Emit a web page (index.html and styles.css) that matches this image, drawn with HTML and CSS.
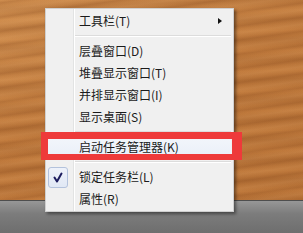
FILE: index.html
```html
<!DOCTYPE html>
<html lang="zh-CN">
<head>
<meta charset="utf-8">
<title>任务栏菜单</title>
<link rel="stylesheet" href="styles.css">
</head>
<body>
<div class="screen">
  <div class="desktop"></div>
  <div class="taskbar"></div>

  <div class="menu">
    <div class="item">
      <span class="icon"></span>
      <span class="label">工具栏(T)</span>
      <span class="arrow"></span>
    </div>
    <div class="sep"></div>
    <div class="item"><span class="icon"></span><span class="label">层叠窗口(D)</span></div>
    <div class="item"><span class="icon"></span><span class="label">堆叠显示窗口(T)</span></div>
    <div class="item"><span class="icon"></span><span class="label">并排显示窗口(I)</span></div>
    <div class="item"><span class="icon"></span><span class="label">显示桌面(S)</span></div>
    <div class="sep"></div>
    <div class="item hot"><span class="icon"></span><span class="label">启动任务管理器(K)</span></div>
    <div class="sep"></div>
    <div class="item">
      <span class="icon"><span class="check"><svg width="20" height="21" viewBox="0 0 20 21"><path d="M6.5 10.5 L9 14.5 L13.5 6.5" fill="none" stroke="#1c1c5e" stroke-width="2" stroke-linecap="round" stroke-linejoin="round"/></svg></span></span>
      <span class="label">锁定任务栏(L)</span>
    </div>
    <div class="item"><span class="icon"></span><span class="label">属性(R)</span></div>
  </div>

  <div class="mark"></div>
</div>
</body>
</html>
```

FILE: styles.css
```css
html, body {
  margin: 0;
  padding: 0;
}

body {
  width: 303px;
  height: 233px;
  overflow: hidden;
  font-family: "Noto Sans CJK SC", "Liberation Sans", sans-serif;
}

.screen {
  position: relative;
  width: 303px;
  height: 233px;
  display: flex;
  flex-direction: column;
}

.desktop {
  flex: 1;
  background:
    repeating-linear-gradient(172deg, rgba(120, 60, 20, 0) 0px, rgba(120, 60, 20, 0.18) 3px, rgba(120, 60, 20, 0) 6px, rgba(255, 200, 140, 0.10) 10px, rgba(120, 60, 20, 0) 14px),
    repeating-linear-gradient(178deg, rgba(90, 40, 10, 0) 0px, rgba(90, 40, 10, 0.14) 9px, rgba(90, 40, 10, 0) 20px),
    linear-gradient(160deg, #d29050 0%, #c27c3e 45%, #bd773a 100%);
}

.taskbar {
  height: 32px;
  border-top: 1px solid #4e4e4e;
  background: linear-gradient(#979797, #7c7c7c 40%, #6e6e6e);
}

.menu {
  position: absolute;
  left: 45px;
  top: 8px;
  width: 189px;
  box-sizing: border-box;
  border: 1px solid #cfcfcf;
  padding: 1px 2px;
  background:
    linear-gradient(to right, transparent 27px, #e2e3e3 27px, #e2e3e3 28px, #ffffff 28px, #ffffff 29px, transparent 29px),
    #f0f0f0;
  box-shadow: 2px 2px 3px rgba(0, 0, 0, 0.45);
  color: #1b1b1b;
  font-size: 12px;
}

.item {
  display: flex;
  align-items: center;
  height: 22px;
  line-height: 22px;
}

.item.hot {
  background: linear-gradient(#f3f6fb, #e9eff8);
}

.icon {
  width: 28px;
  height: 22px;
  flex: none;
  display: flex;
  align-items: center;
}

.label {
  flex: 1;
  padding-left: 3px;
  white-space: nowrap;
}

.arrow {
  width: 0;
  height: 0;
  border-top: 3.5px solid transparent;
  border-bottom: 3.5px solid transparent;
  border-left: 4px solid #111;
  margin-right: 9px;
}

.sep {
  height: 0;
  margin: 3px 0 3px 27px;
  border-top: 1px solid #dcdcdc;
  border-bottom: 1px solid #ffffff;
}

.check {
  width: 20px;
  height: 21px;
  box-sizing: border-box;
  border: 1px solid #b3c2dc;
  border-radius: 3px;
  background: linear-gradient(#eef2fa, #e1e8f5);
  display: flex;
}

.check svg {
  display: block;
  margin: -1px;
}

.mark {
  position: absolute;
  left: 41px;
  top: 132px;
  width: 201px;
  height: 28px;
  box-sizing: border-box;
  border-style: solid;
  border-color: #ee3a3a;
  border-width: 7px 10px 6px 7px;
}
```
